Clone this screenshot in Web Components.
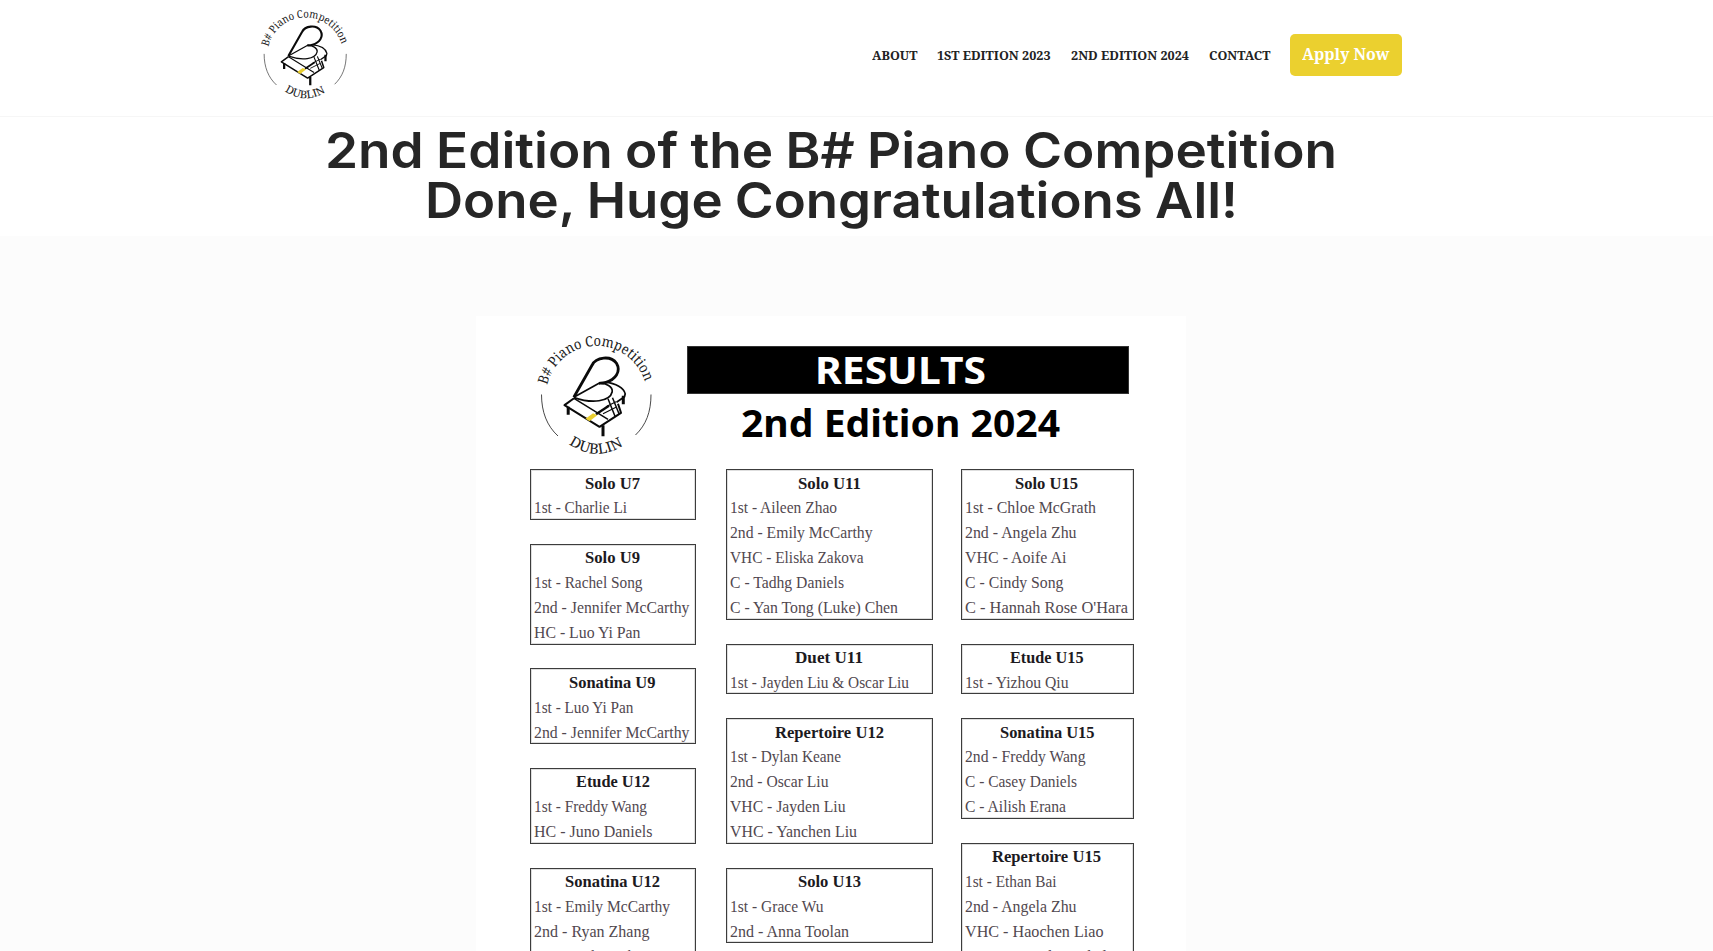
<!DOCTYPE html>
<html lang="en">
<head>
<meta charset="utf-8">
<title>B# Piano Competition</title>
<style>
html,body{margin:0;padding:0;height:951px;overflow:hidden;background:#fff}
</style>
</head>
<body>
<piano-page></piano-page>
<script>
// Inline text stretched horizontally to a given width.
class FitText extends HTMLElement {
  connectedCallback() {
    if (this.shadowRoot) return;
    this.attachShadow({mode:'open'}).innerHTML =
      `<style>:host{display:inline-block;white-space:nowrap;text-align:left}span{display:inline-block;transform-origin:0 50%}</style><span><slot></slot></span>`;
    const w = parseFloat(this.getAttribute('w'));
    const s = this.shadowRoot.querySelector('span');
    const n = s.getBoundingClientRect().width;
    if (w && n) { this.style.width = w + 'px'; s.style.transform = `scaleX(${w / n})`; }
  }
}

class PianoLogo extends HTMLElement {
  connectedCallback() {
    this.attachShadow({mode:'open'}).innerHTML = `
<style>:host{display:block}svg{display:block;width:100%;height:100%;overflow:visible}text{font-family:"Noto Serif","DejaVu Serif Condensed","DejaVu Serif",serif;fill:#222}</style>
<svg viewBox="0 0 120 120">
<defs><path id="top" d="M11.300 49 A50.500 50.500 0 0 1 109.800 49.500"/><path id="bot" d="M29 105.500 Q61 130 93 105.500"/></defs>
<text font-size="14.200"><textPath href="#top" startOffset="0" textLength="132" lengthAdjust="spacingAndGlyphs">B# Piano Competition</textPath></text>
<text font-size="14.300"><textPath href="#bot" startOffset="4.500" textLength="58.500" lengthAdjust="spacingAndGlyphs">DUBLIN</textPath></text>
<g fill="none" stroke="#333" stroke-width=".9"><path d="M5.500 58.500C5.500 76 11 90 22 100M115 58.500C115 76 110 89 99.500 99"/></g>
<g fill="none" stroke="#0a0a0a" stroke-linejoin="round" transform="translate(0 .8)">
<path stroke-width="2.800" d="M37.800 60.500 L56 28.500 C60 20 75 18.500 80.500 26.500 C85.500 35 79 43 70 45.500 C66 46.600 65 46.300 63 46.500"/>
<path stroke-width="1.700" d="M37.800 60.500 L63 46.500 C70 46 77 50 76.200 55 C74 65 56 67 38 60.800"/>
<path stroke-width="1.700" d="M69 45.300 C80 46.500 88 51 89.200 57 L88.500 60 L80.500 65.500"/>
<path stroke-width="2" d="M38 61.500 L28.500 68.300 L63.500 90 L85 76 L82 67"/>
<path stroke-width="1.500" d="M38 61.500 L72 82.500 M72 62 L79 79.500 M76.500 61 L83 77"/>
<path stroke-width="1.200" d="M67 77 L80 70.500 M70 70 L80 65"/>
<path stroke-width="2.400" d="M60 77.500 L73 69"/>
<path stroke-width="3" d="M32.200 70v8M67 88.500v11M87.300 59v8.500"/>
</g>
<path fill="#e9ce2f" d="M49.500 82.800 L57 77.300 L61.300 79.300 L53.500 85.300z"/>
</svg>`;
  }
}

class NavLink extends HTMLElement {
  connectedCallback() {
    this.attachShadow({mode:'open'}).innerHTML =
      `<style>:host{display:block;font:bold 13px/20px "Noto Serif","DejaVu Serif Condensed","DejaVu Serif",serif;color:#222}</style><fit-text w="${this.getAttribute('w')}"><slot></slot></fit-text>`;
  }
}

class SiteHeader extends HTMLElement {
  connectedCallback() {
    this.attachShadow({mode:'open'}).innerHTML = `
<style>
:host{display:flex;justify-content:space-between;align-items:flex-start;height:117px;box-sizing:border-box;padding:10px 311px 0 260px;border-bottom:1px solid #f6f6f6;background:#fff}
piano-logo{width:90px;height:90px}
nav{display:flex;align-items:center;gap:20px;height:90px}
.b{box-sizing:border-box;width:112px;height:42px;border-radius:5px;background:#ebd02f;color:#fff;padding:9px 0 0 12px;font:bold 16px/22px "Noto Serif","DejaVu Serif Condensed","DejaVu Serif",serif}
</style>
<piano-logo></piano-logo>
<nav><nav-link w="45.500">ABOUT</nav-link><nav-link w="113.500">1ST EDITION 2023</nav-link><nav-link w="118">2ND EDITION 2024</nav-link><nav-link w="61.500">CONTACT</nav-link><div class="b"><fit-text w="87.500">Apply Now</fit-text></div></nav>`;
  }
}

class PageTitle extends HTMLElement {
  connectedCallback() {
    this.attachShadow({mode:'open'}).innerHTML = `
<style>:host{display:block;height:119px;box-sizing:border-box;padding:9px 51px 0 0;background:#fff}
h1{margin:0;font:600 49px/50px Inter,sans-serif;color:#262626;word-spacing:-1px}
fit-text{display:block;margin:0 auto}</style>
<h1><fit-text w="1012">2nd Edition of the B# Piano Competition</fit-text><fit-text w="813">Done, Huge Congratulations All!</fit-text></h1>`;
  }
}

class ResultBox extends HTMLElement {
  connectedCallback() {
    const rows = JSON.parse(this.getAttribute('rows'));
    this.attachShadow({mode:'open'}).innerHTML = `
<style>:host{display:block;box-sizing:border-box;height:${rows.length*24.9+1}px;border:1px solid #3c3c3c;outline:1px solid rgba(0,0,0,.13);outline-offset:-2px;padding:1.3px 0 0 3px;margin-bottom:23.9px;font:17px/24.9px "Liberation Serif",serif;color:#51484f}
div{height:24.9px}.h{text-align:center;font-weight:bold;color:#1c1a1e;margin-left:-4px}</style>
${rows.map((r,i)=>`<div class="${i?'':'h'}"><fit-text w="${r[1]}">${r[0]}</fit-text></div>`).join('')}`;
  }
}

const COLS = [
 [[["Solo U7",55],["1st - Charlie Li",93]],
  [["Solo U9",55],["1st - Rachel Song",108.500],["2nd - Jennifer McCarthy",155.500],["HC - Luo Yi Pan",106.500]],
  [["Sonatina U9",86.500],["1st - Luo Yi Pan",99.500],["2nd - Jennifer McCarthy",155.500]],
  [["Etude U12",74],["1st - Freddy Wang",113],["HC - Juno Daniels",118.500]],
  [["Sonatina U12",95],["1st - Emily McCarthy",136],["2nd - Ryan Zhang",115.500],["VHC - Aileen Zhao",115]]],
 [[["Solo U11",63],["1st - Aileen Zhao",107],["2nd - Emily McCarthy",142.500],["VHC - Eliska Zakova",133.500],["C - Tadhg Daniels",114],["C - Yan Tong (Luke) Chen",168]],
  [["Duet U11",68],["1st - Jayden Liu &amp; Oscar Liu",179]],
  [["Repertoire U12",109],["1st - Dylan Keane",111],["2nd - Oscar Liu",98.500],["VHC - Jayden Liu",115.500],["VHC - Yanchen Liu",127]],
  [["Solo U13",63],["1st - Grace Wu",93.500],["2nd - Anna Toolan",119]]],
 [[["Solo U15",63],["1st - Chloe McGrath",131],["2nd - Angela Zhu",111.500],["VHC - Aoife Ai",101.500],["C - Cindy Song",98.500],["C - Hannah Rose O&#39;Hara",163]],
  [["Etude U15",73.500],["1st - Yizhou Qiu",103.500]],
  [["Sonatina U15",94.500],["2nd - Freddy Wang",120.500],["C - Casey Daniels",112],["C - Ailish Erana",101]],
  [["Repertoire U15",109],["1st - Ethan Bai",91.500],["2nd - Angela Zhu",111.500],["VHC - Haochen Liao",138.500],["VHC - Joseph Markel",142]]]
];

class ResultsPoster extends HTMLElement {
  connectedCallback() {
    this.attachShadow({mode:'open'}).innerHTML = `
<style>
:host{display:block;box-sizing:border-box;width:710px;height:635px;padding:20px 52px 0 54.4px;background:#fff;overflow:hidden}
.top{display:flex;height:133.3px}
piano-logo{width:120px;height:120px;margin-left:5.6px}
.t{margin:9.5px 0 0 31px;width:442.5px;text-align:center;font:bold 37.5px/48px "Noto Sans","Open Sans",sans-serif}
.bar{height:48.500px;background:#000;color:#fff;box-shadow:inset 0 0 0 1px #333;margin-bottom:5px}
.bar fit-text{margin-right:16px}.sub{margin-right:16px;color:#000}
.cols{display:flex}
.cols>div{width:165.3px}
.cols>div:nth-child(2){width:206.5px;margin:0 28.2px 0 30.6px}
.cols>div:nth-child(3){width:172.6px}
</style>
<div class="top"><piano-logo></piano-logo><div class="t"><div class="bar"><fit-text w="171">RESULTS</fit-text></div><div class="sub"><fit-text w="319">2nd Edition 2024</fit-text></div></div></div>
<div class="cols">${COLS.map(c=>`<div>${c.map(b=>`<result-box rows='${JSON.stringify(b)}'></result-box>`).join('')}</div>`).join('')}</div>`;
  }
}

class PianoPage extends HTMLElement {
  connectedCallback() {
    this.attachShadow({mode:'open'}).innerHTML = `
<style>:host{display:block;height:951px;overflow:hidden}
main{height:715px;box-sizing:border-box;padding:80px 0 0 476px;background:#fcfcfc}</style>
<site-header></site-header><page-title></page-title><main><results-poster></results-poster></main>`;
  }
}
customElements.define('fit-text', FitText);
customElements.define('piano-logo', PianoLogo);
customElements.define('nav-link', NavLink);
customElements.define('site-header', SiteHeader);
customElements.define('page-title', PageTitle);
customElements.define('result-box', ResultBox);
customElements.define('results-poster', ResultsPoster);
customElements.define('piano-page', PianoPage);
</script>
</body>
</html>
